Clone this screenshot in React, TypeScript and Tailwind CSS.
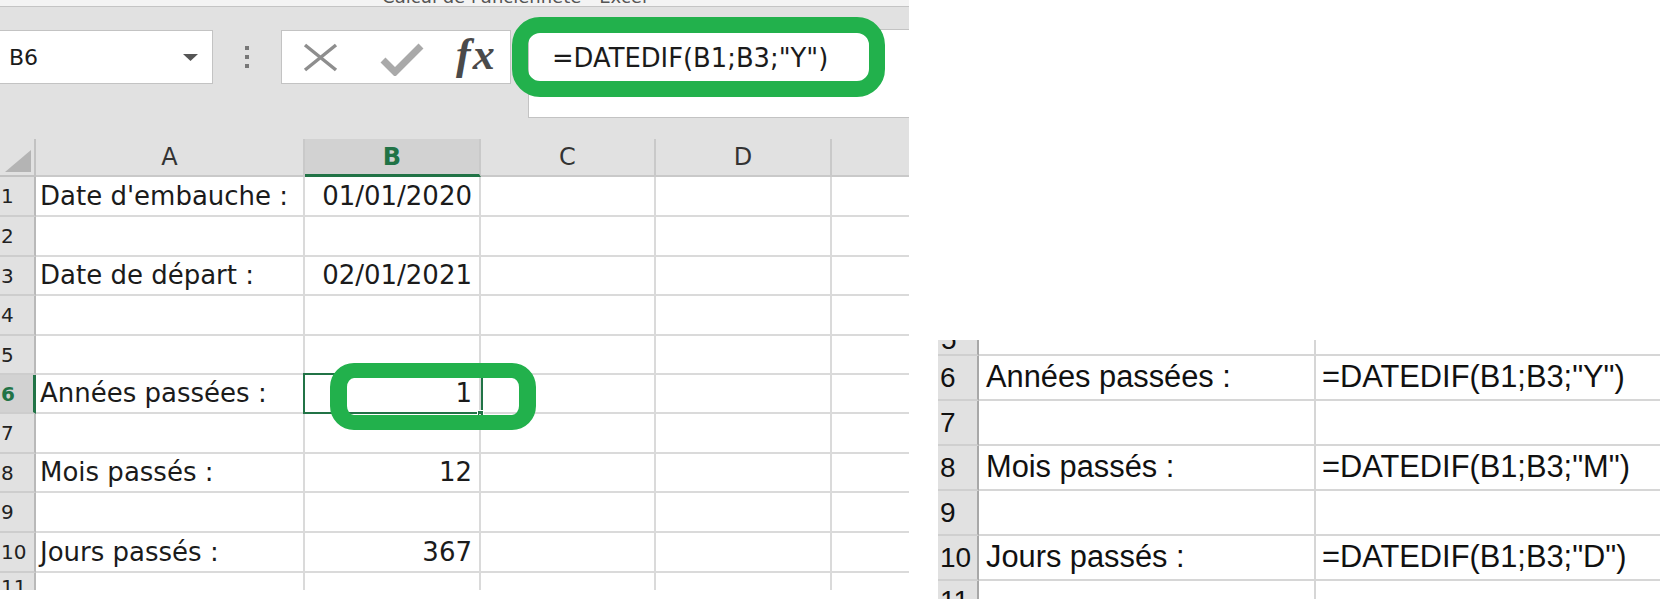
import React from "react";

const GREEN = "#217346";

type Row = { n: string; h: number; a?: string; b?: string; sel?: boolean };

const leftRows: Row[] = [
  { n: "1", h: 40, a: "Date d'embauche :", b: "01/01/2020" },
  { n: "2", h: 40 },
  { n: "3", h: 39, a: "Date de départ :", b: "02/01/2021" },
  { n: "4", h: 40 },
  { n: "5", h: 39 },
  { n: "6", h: 39, a: "Années passées :", b: "1", sel: true },
  { n: "7", h: 40 },
  { n: "8", h: 39, a: "Mois passés :", b: "12" },
  { n: "9", h: 40 },
  { n: "10", h: 40, a: "Jours passés :", b: "367" },
];

const rightRows = [
  { n: "6", a: "Années passées :", f: '=DATEDIF(B1;B3;"Y")' },
  { n: "7" },
  { n: "8", a: "Mois passés :", f: '=DATEDIF(B1;B3;"M")' },
  { n: "9" },
  { n: "10", a: "Jours passés :", f: '=DATEDIF(B1;B3;"D")' },
];

function LeftShot() {
  return (
    <div className="relative w-[909px] h-[590px] shrink-0 overflow-hidden flex flex-col font-['DejaVu_Sans',sans-serif] text-[#1b1b1b]">
      {/* title bar, mostly cut off */}
      <div className="h-[7px] bg-[#f3f3f3] border-b border-[#c4c4c4] overflow-hidden flex justify-center pl-[120px]">
        <span className="text-[18px] leading-none -mt-[12px] text-[#555]">Calcul de l'ancienneté - Excel</span>
      </div>

      {/* formula bar area */}
      <div className="h-[132px] bg-[#e1e1e1] flex items-start pt-[22px]">
        <div className="mt-[1px] w-[213px] h-[54px] bg-white border border-l-0 border-[#c3c3c3] flex items-center justify-between pl-[9px] pr-[14px]">
          <span className="text-[22px]">B6</span>
          <svg width="15" height="7" viewBox="0 0 15 7">
            <path d="M0 0 H15 L7.5 7 Z" fill="#555" />
          </svg>
        </div>
        <div className="w-[68px] h-[56px] flex flex-col items-center justify-center gap-[5px]">
          <span className="w-[4px] h-[4px] bg-[#777]" />
          <span className="w-[4px] h-[4px] bg-[#777]" />
          <span className="w-[4px] h-[4px] bg-[#777]" />
        </div>
        <div className="mt-[1px] w-[230px] h-[54px] bg-white border border-[#c3c3c3] flex items-center">
          <svg className="ml-[20px]" width="37" height="29" viewBox="0 0 37 29">
            <path d="M3 2 L34 27 M34 2 L3 27" stroke="#8e8e8e" strokeWidth="3.5" />
          </svg>
          <svg className="ml-[41px] mt-[4px]" width="44" height="33" viewBox="0 0 44 33">
            <path d="M3 17 L15 29 L41 3" stroke="#a9a9a9" strokeWidth="7" fill="none" />
          </svg>
          <span className="ml-[32px] -mt-[4px] text-[44px] leading-none italic font-bold tracking-[2px] text-[#4a4a4a] font-['Liberation_Serif',serif]">
            fx
          </span>
        </div>
        <div className="ml-[17px] w-[381px] h-[89px] bg-white border border-r-0 border-[#c3c3c3] pl-[23px] pt-[13px]">
          <span className="text-[25.8px] leading-[31px]">=DATEDIF(B1;B3;"Y")</span>
        </div>
      </div>

      {/* column headers */}
      <div className="flex h-[38px] bg-[#e1e1e1] text-[24px] text-[#333]">
        <div className="w-[36px] border-r-2 border-b-2 border-[#c2c2c2] flex items-end justify-end p-[3px]">
          <svg width="26" height="22" viewBox="0 0 26 22">
            <path d="M26 0 V22 H0 Z" fill="#b4b4b4" />
          </svg>
        </div>
        <div className="w-[269px] border-r-2 border-b-2 border-[#c9c9c9] flex items-center justify-center">A</div>
        <div
          className="w-[176px] bg-[#d2d2d2] border-r-2 border-[#c9c9c9] border-b-[3px] flex items-center justify-center font-bold text-[#217346]"
          style={{ borderBottomColor: GREEN }}
        >
          B
        </div>
        <div className="w-[175px] border-r-2 border-b-2 border-[#c9c9c9] flex items-center justify-center">C</div>
        <div className="w-[176px] border-r-2 border-b-2 border-[#c9c9c9] flex items-center justify-center">D</div>
        <div className="flex-1 border-b-2 border-[#c9c9c9]" />
      </div>

      {/* rows */}
      {leftRows.map((r) => (
        <div key={r.n} className="flex text-[26px]" style={{ height: r.h }}>
          <div
            className={
              "w-[36px] border-b-2 border-[#cdcdcd] flex items-center pl-[1px] text-[20px] " +
              (r.sel
                ? "bg-[#d2d2d2] border-r-[3px] border-r-[#217346] font-bold text-[#217346]"
                : "bg-[#e1e1e1] border-r-2 border-r-[#b9b9b9] text-[#222]")
            }
          >
            {r.n}
          </div>
          <div className="w-[269px] border-r-2 border-b-2 border-[#dadada] flex items-center pl-[4px] whitespace-nowrap">
            {r.a}
          </div>
          <div className="relative w-[176px] border-r-2 border-b-2 border-[#dadada] flex items-center justify-end pr-[7px]">
            {r.b}
            {r.sel && (
              <>
                <div className="absolute -left-[2px] -top-[2px] w-[180px] h-[41px] border-2 border-[#217346]" />
                <div className="absolute -right-[5px] -bottom-[5px] w-[7px] h-[7px] bg-[#217346] border border-white" />
              </>
            )}
          </div>
          <div className="w-[175px] border-r-2 border-b-2 border-[#dadada]" />
          <div className="w-[176px] border-r-2 border-b-2 border-[#dadada]" />
          <div className="flex-1 border-b-2 border-[#dadada]" />
        </div>
      ))}
      <div className="flex flex-1 overflow-hidden">
        <div className="w-[36px] bg-[#e1e1e1] border-r-2 border-[#b9b9b9] text-[20px] pl-[1px] pt-[4px] leading-none text-[#222]">
          11
        </div>
        <div className="w-[269px] border-r-2 border-[#dadada]" />
        <div className="w-[176px] border-r-2 border-[#dadada]" />
        <div className="w-[175px] border-r-2 border-[#dadada]" />
        <div className="w-[176px] border-r-2 border-[#dadada]" />
      </div>

      {/* paint annotations */}
      <div className="absolute left-[512px] top-[17px] w-[373px] h-[80px] border-[16px] border-[#22b14c] rounded-[28px]" />
      <div className="absolute left-[330px] top-[363px] w-[206px] h-[67px] border-x-[17px] border-y-[15px] border-[#22b14c] rounded-[24px]" />
    </div>
  );
}

function RightShot() {
  return (
    <div className="ml-[29px] mt-[340px] w-[722px] h-[259px] shrink-0 overflow-hidden flex flex-col font-['Liberation_Sans',Arial,sans-serif] text-[30.8px] text-[#111]">
      <div className="flex h-[16px] shrink-0">
        <div className="w-[41px] bg-[#e1e1e1] border-r-2 border-b-2 border-r-[#a8a8a8] border-b-[#cfcfcf] overflow-hidden pl-[3px] text-[28px] leading-none">
          <span className="block -mt-[14px]">5</span>
        </div>
        <div className="w-[337px] border-r-2 border-b-2 border-[#d6d6d6]" />
        <div className="flex-1 border-b-2 border-[#d6d6d6]" />
      </div>
      {rightRows.map((r) => (
        <div key={r.n} className="flex h-[45px] shrink-0">
          <div className="w-[41px] bg-[#e1e1e1] border-r-2 border-b-2 border-r-[#a8a8a8] border-b-[#cfcfcf] flex items-center pl-[2px] text-[28px]">
            {r.n}
          </div>
          <div className="w-[337px] border-r-2 border-b-2 border-[#d6d6d6] flex items-center pl-[7px] whitespace-nowrap">
            {r.a}
          </div>
          <div className="flex-1 border-b-2 border-[#d6d6d6] flex items-center pl-[6px] whitespace-nowrap">{r.f}</div>
        </div>
      ))}
      <div className="flex flex-1">
        <div className="w-[41px] bg-[#e1e1e1] border-r-2 border-r-[#a8a8a8] overflow-hidden pl-[2px] pt-[6px] text-[28px] leading-none">
          11
        </div>
        <div className="w-[337px] border-r-2 border-[#d6d6d6]" />
      </div>
    </div>
  );
}

export default function App() {
  return (
    <div className="flex items-start w-[1660px] h-[599px] bg-white overflow-hidden">
      <LeftShot />
      <RightShot />
    </div>
  );
}
